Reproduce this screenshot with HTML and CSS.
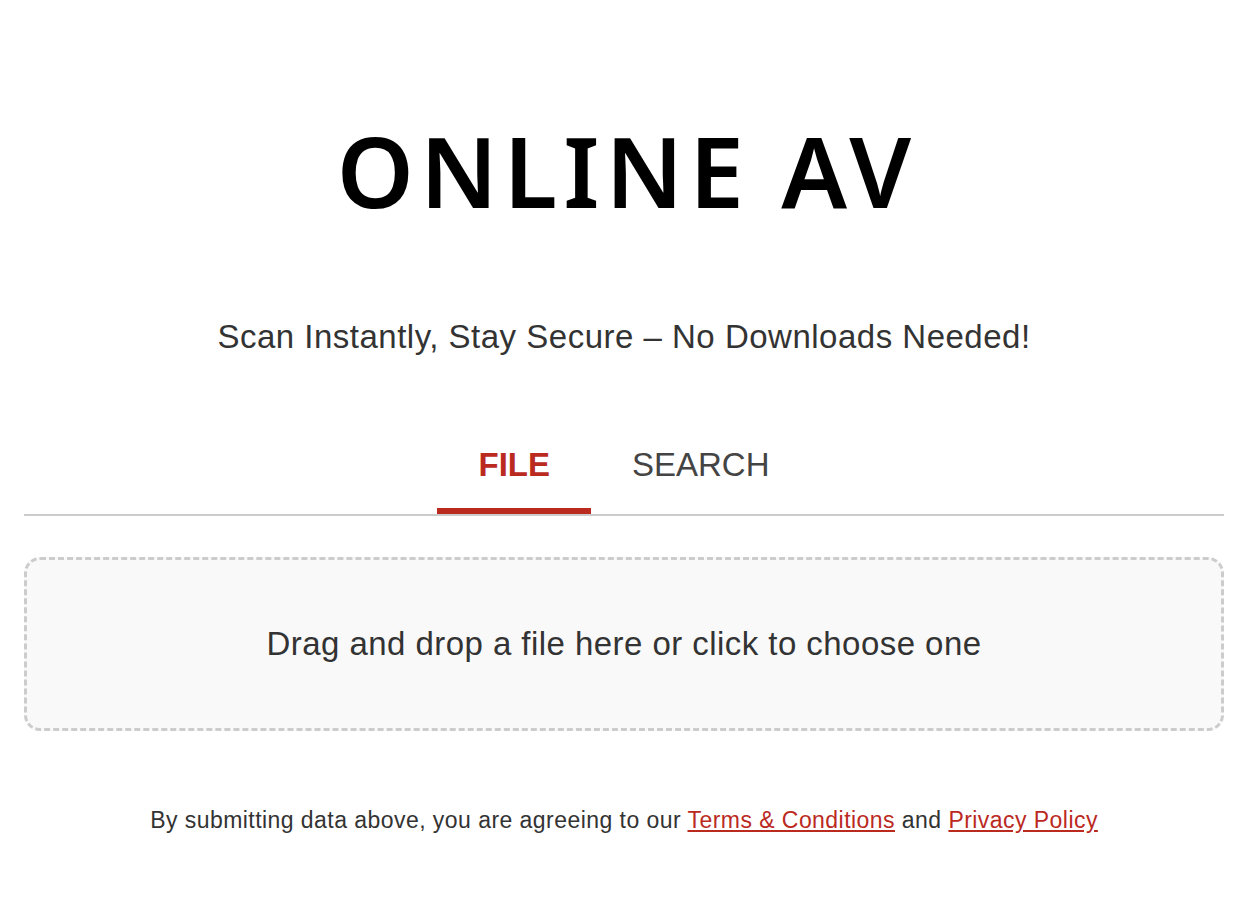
FILE: index.html
```html
<!DOCTYPE html>
<html lang="en">

<head>
    <meta charset="UTF-8">
    <meta name="viewport" content="width=device-width, initial-scale=1.0">
    <title>Online AV</title>
    <link rel="stylesheet" href="styles.css">
</head>

<body>
    <div class="page">
        <h1 class="logo">ONLINE AV</h1>
        <p class="tagline">Scan Instantly, Stay Secure – No Downloads Needed!</p>

        <div class="tabs">
            <a href="javascript:;" class="tab active">FILE</a>
            <a href="javascript:;" class="tab">SEARCH</a>
        </div>

        <label class="dropzone">
            <input type="file" class="file-input">
            <span>Drag and drop a file here or click to choose one</span>
        </label>

        <p class="terms">
            By submitting data above, you are agreeing to our
            <a href="javascript:;">Terms &amp; Conditions</a> and
            <a href="javascript:;">Privacy Policy</a>
        </p>
    </div>
</body>

</html>
```

FILE: styles.css
```css
* {
    margin: 0;
    padding: 0;
    box-sizing: border-box;
}

body {
    background: #fff;
    color: #333;
    font-family: "Liberation Sans", Arial, sans-serif;
}

.page {
    width: 1200px;
    margin-left: 24px;
    padding-top: 120px;
    text-align: center;
}

.logo {
    font-family: "Noto Sans", sans-serif;
    font-size: 98px;
    font-weight: 600;
    line-height: 100px;
    letter-spacing: 6px;
    padding-left: 6px;
    color: #000;
}

.tagline {
    margin-top: 100px;
    font-size: 33px;
    line-height: 34px;
    letter-spacing: 0.5px;
}

.tabs {
    margin-top: 92px;
    display: flex;
    justify-content: center;
    border-bottom: 2px solid #ccc;
}

.tab {
    display: block;
    padding: 0 41px 24px;
    font-size: 33px;
    line-height: 38px;
    color: #444;
    text-decoration: none;
    border-bottom: 6px solid transparent;
}

.tab.active {
    color: #bb2a1f;
    font-weight: bold;
    border-bottom-color: #bb2a1f;
}

.dropzone {
    margin-top: 41px;
    height: 174px;
    display: flex;
    align-items: center;
    justify-content: center;
    border: 3px dashed #ccc;
    border-radius: 16px;
    background: #f9f9f9;
    font-size: 33px;
    letter-spacing: 0.45px;
    color: #333;
    cursor: pointer;
}

.file-input {
    display: none;
}

.terms {
    margin-top: 76px;
    font-size: 23px;
    line-height: 26px;
    letter-spacing: 0.45px;
}

.terms a {
    color: #bb2a1f;
}
```
